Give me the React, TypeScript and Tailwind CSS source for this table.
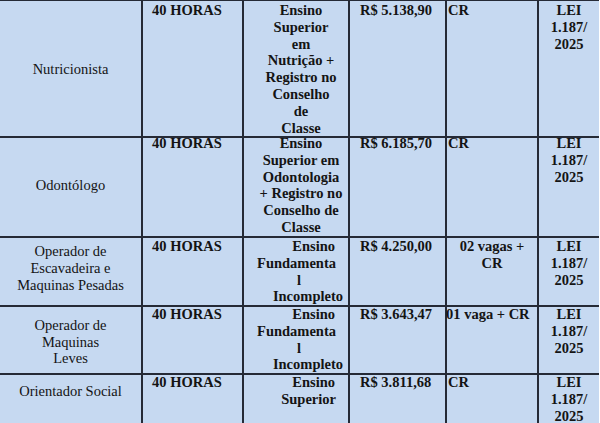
import React from "react";

type Line = { text: string; cls: string };

type Row = {
  cargo: string[];
  cargoCls: string;
  height: string;
  carga: string;
  escolaridade: Line[];
  salario: string;
  vagas: string[];
  vagasCls: string;
};

const c = (text: string): Line => ({ text, cls: "text-center pl-[10px]" });

const ROWS: Row[] = [
  {
    cargo: ["Nutricionista"],
    cargoCls: "justify-center",
    height: "h-[133px]",
    carga: "40 HORAS",
    escolaridade: [
      c("Ensino"),
      c("Superior"),
      c("em"),
      c("Nutrição +"),
      c("Registro no"),
      c("Conselho"),
      c("de"),
      c("Classe"),
    ],
    salario: "R$ 5.138,90",
    vagas: ["CR"],
    vagasCls: "pl-[1px]",
  },
  {
    cargo: ["Odontólogo"],
    cargoCls: "justify-center",
    height: "h-[103px]",
    carga: "40 HORAS",
    escolaridade: [
      c("Ensino"),
      c("Superior em"),
      c("Odontologia"),
      c("+ Registro no"),
      c("Conselho de"),
      c("Classe"),
    ],
    salario: "R$ 6.185,70",
    vagas: ["CR"],
    vagasCls: "pl-[1px]",
  },
  {
    cargo: ["Operador de", "Escavadeira e", "Maquinas Pesadas"],
    cargoCls: "justify-center pb-[6px]",
    height: "h-[68px]",
    carga: "40 HORAS",
    escolaridade: [
      { text: "Ensino", cls: "text-right pr-[13px]" },
      { text: "Fundamenta", cls: "text-right pr-[12px]" },
      { text: "l", cls: "text-right pr-[47px]" },
      { text: "Incompleto", cls: "text-right pr-[5px]" },
    ],
    salario: "R$ 4.250,00",
    vagas: ["02 vagas +", "CR"],
    vagasCls: "text-center",
  },
  {
    cargo: ["Operador de", "Maquinas", "Leves"],
    cargoCls: "justify-center pt-[6px]",
    height: "h-[68px]",
    carga: "40 HORAS",
    escolaridade: [
      { text: "Ensino", cls: "text-right pr-[13px]" },
      { text: "Fundamenta", cls: "text-right pr-[12px]" },
      { text: "l", cls: "text-right pr-[47px]" },
      { text: "Incompleto", cls: "text-right pr-[5px]" },
    ],
    salario: "R$ 3.643,47",
    vagas: ["01 vaga + CR"],
    vagasCls: "-ml-[1px]",
  },
  {
    cargo: ["Orientador Social"],
    cargoCls: "justify-start pt-[10px]",
    height: "h-[60px]",
    carga: "40 HORAS",
    escolaridade: [
      { text: "Ensino", cls: "text-right pr-[13px]" },
      { text: "Superior", cls: "text-right pr-[12px]" },
    ],
    salario: "R$ 3.811,68",
    vagas: ["CR"],
    vagasCls: "pl-[1px]",
  },
];

const cell = "border-r-2 border-b-2 border-[#252a36] pt-[1px]";

const App = () => {
  return (
    <div className="h-[423px] w-[600px] overflow-hidden bg-white font-['Liberation_Serif',serif] text-[14.5px] leading-[16.8px] text-[#141414]">
      <div className="w-[599px] border-t border-[#252a36] bg-[#c6d9f1]">
        {ROWS.map((row, i) => (
          <div
            key={i}
            className={`grid grid-cols-[143px_101px_106px_97px_92px_60px] ${row.height}`}
          >
            <div className={`${cell} flex flex-col items-center ${row.cargoCls}`}>
              {row.cargo.map((line) => (
                <div key={line} className="text-center">
                  {line}
                </div>
              ))}
            </div>
            <div className={`${cell} pl-[9px] font-bold`}>{row.carga}</div>
            <div className={`${cell} font-bold`}>
              {row.escolaridade.map((line, j) => (
                <div key={j} className={`whitespace-nowrap ${line.cls}`}>
                  {line.text}
                </div>
              ))}
            </div>
            <div className={`${cell} pl-[10px] font-bold`}>{row.salario}</div>
            <div className={`${cell} font-bold whitespace-nowrap ${row.vagasCls}`}>
              {row.vagas.map((line) => (
                <div key={line}>{line}</div>
              ))}
            </div>
            <div className="border-b-2 border-[#252a36] pt-[1px] text-center font-bold">
              <div>LEI</div>
              <div>1.187/</div>
              <div>2025</div>
            </div>
          </div>
        ))}
      </div>
    </div>
  );
};

export default App;
